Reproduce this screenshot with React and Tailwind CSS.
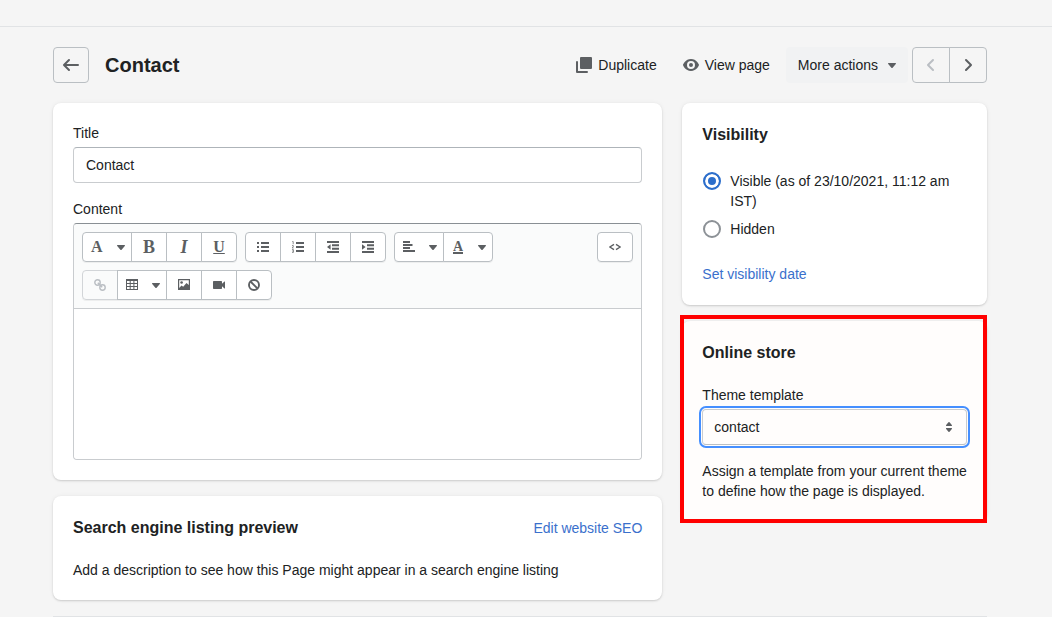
import { useState } from 'react';
import clsx from 'clsx';

const CARD = 'rounded-lg p-5 shadow-[0_0_5px_rgba(23,24,24,0.05),0_1px_2px_rgba(0,0,0,0.15)]';

function Icon({ size = 20, children, className }) {
    return (
        <svg width={size} height={size} viewBox={`0 0 ${size} ${size}`} fill="currentColor" className={clsx('shrink-0', className)} aria-hidden="true">
            {children}
        </svg>
    );
}

const Caret = () => (
    <svg width="8" height="8" viewBox="0 0 8 8" fill="currentColor" className="shrink-0" aria-hidden="true">
        <path d="M.6 2h6.8c.6 0 .8.600.4 1L4.600 6.700a.8.8 0 0 1-1.200 0L.2 3C-.2 2.600 0 2 .6 2z" />
    </svg>
);

function ToolGroup({ children }) {
    return <div className="flex rounded shadow-[0_1px_0_rgba(0,0,0,0.05)]">{children}</div>;
}

function ToolButton({ label, menu, disabled, children }) {
    return (
        <button
            type="button"
            aria-label={label}
            disabled={disabled}
            className={clsx(
                'flex h-[30px] items-center border -ml-px first:ml-0 first:rounded-l last:rounded-r',
                menu ? 'w-[50px] justify-between pl-2 pr-1.5' : 'w-9 justify-center',
                disabled ? 'border-[#d2d5d8] bg-[#fafbfb] text-[#babec3]' : 'relative border-[#babfc3] bg-white text-[#5c5f62]'
            )}
        >
            {children}
            {menu && <Caret />}
        </button>
    );
}

function Toolbar() {
    return (
        <div className="flex items-start justify-between rounded-t bg-[#fafbfb] border-b border-[#c9cccf] p-2">
            <div className="flex flex-wrap gap-2 max-w-[420px]">
                <ToolGroup>
                    <ToolButton label="Formatting" menu><span className="font-['Liberation_Serif',serif] text-base leading-5 font-bold">A</span></ToolButton>
                    <ToolButton label="Bold"><span className="font-['Liberation_Serif',serif] text-lg leading-5 font-bold">B</span></ToolButton>
                    <ToolButton label="Italic"><span className="font-['Liberation_Serif',serif] text-lg leading-5 font-bold italic">I</span></ToolButton>
                    <ToolButton label="Underline"><span className="font-['Liberation_Serif',serif] text-base leading-5 font-bold underline underline-offset-1">U</span></ToolButton>
                </ToolGroup>
                <ToolGroup>
                    <ToolButton label="Bulleted list">
                        <Icon size={12}>
                            <path d="M0 1h2v2H0zM0 5h2v2H0zM0 9h2v2H0zM4 1h8v2H4zM4 5h8v2H4zM4 9h8v2H4z" />
                        </Icon>
                    </ToolButton>
                    <ToolButton label="Numbered list">
                        <Icon size={12}>
                            <path d="M4 1h8v2H4zM4 5h8v2H4zM4 9h8v2H4z" />
                            <path d="M.3.5h.9v2.7M0 4.6h1.3v1.2L.2 7h1.4M0 8.6h1.4v2.8H0M.4 10h1" fill="none" stroke="currentColor" strokeWidth=".7" />
                        </Icon>
                    </ToolButton>
                    <ToolButton label="Outdent">
                        <Icon size={12}>
                            <path d="M0 0h12v2H0zM5 3.3h7v2H5zM5 6.7h7v2H5zM0 10h12v2H0zM0 6l3.6-2.8v5.6z" />
                        </Icon>
                    </ToolButton>
                    <ToolButton label="Indent">
                        <Icon size={12}>
                            <path d="M0 0h12v2H0zM5 3.3h7v2H5zM5 6.7h7v2H5zM0 10h12v2H0zM3.6 6L0 3.2v5.6z" />
                        </Icon>
                    </ToolButton>
                </ToolGroup>
                <ToolGroup>
                    <ToolButton label="Alignment" menu>
                        <Icon size={12}>
                            <path d="M0 0h7v2H0zM0 3h9.500v2H0zM0 6h7v2H0zM0 9h12v2H0z" />
                        </Icon>
                    </ToolButton>
                    <ToolButton label="Color" menu>
                        <span className="ml-px w-[10px] border-b-2 border-current text-center font-['Liberation_Serif',serif] text-sm leading-[11px] font-bold">A</span>
                    </ToolButton>
                </ToolGroup>
                <ToolGroup>
                    <ToolButton label="Insert link" disabled>
                        <Icon size={12}>
                            <g fill="none" stroke="currentColor" strokeWidth="1.400">
                                <circle cx="3.500" cy="3.500" r="2.700" />
                                <circle cx="8.500" cy="8.500" r="2.700" />
                                <path d="M3.800 3.800l4.400 4.400" />
                            </g>
                        </Icon>
                    </ToolButton>
                    <ToolButton label="Insert table" menu>
                        <Icon size={12}>
                            <path fillRule="evenodd" d="M0 0h12v11H0zM1 2v2h2.700V2zM4.700 2v2h2.700V2zM8.400 2v2H11V2zM1 5v2h2.700V5zM4.700 5v2h2.700V5zM8.400 5v2H11V5zM1 8v2h2.700V8zM4.700 8v2h2.700V8zM8.400 8v2H11V8z" />
                        </Icon>
                    </ToolButton>
                    <ToolButton label="Insert image">
                        <Icon size={12}>
                            <path fillRule="evenodd" d="M0 0h12v11H0zM1.200 1.200v7.800l2.300-2.500 1.700 1.300L8.500 4l2.300 2V1.200z" />
                            <circle cx="3.600" cy="3.500" r="1.300" />
                        </Icon>
                    </ToolButton>
                    <ToolButton label="Insert video">
                        <Icon size={12}>
                            <path d="M.7 2h7.600c.4 0 .7.300.7.700v2L11.500 2.500h.5v7h-.5L9 7.300v2c0 .4-.3.700-.7.700H.7A.7.7 0 0 1 0 9.300V2.700C0 2.300.3 2 .7 2z" />
                        </Icon>
                    </ToolButton>
                    <ToolButton label="Clear formatting">
                        <Icon size={12}>
                            <g fill="none" stroke="currentColor" strokeWidth="1.900">
                                <circle cx="6" cy="6" r="5" />
                                <path d="M2.500 2.500l7 7" />
                            </g>
                        </Icon>
                    </ToolButton>
                </ToolGroup>
            </div>
            <ToolGroup>
                <ToolButton label="Show HTML">
                    <Icon size={12}>
                        <path d="M5 3.400L.8 6 5 8.600M7 3.400L11.200 6 7 8.600" fill="none" stroke="currentColor" strokeWidth="1.400" />
                    </Icon>
                </ToolButton>
            </ToolGroup>
        </div>
    );
}

function PageHeader() {
    return (
        <header className="flex items-center">
            <button type="button" aria-label="Pages" className="flex size-9 items-center justify-center rounded border border-[#babfc3] text-[#5c5f62]">
                <Icon>
                    <path d="M17 9H5.414l3.293-3.293a.999.999 0 1 0-1.414-1.414l-5 5a.999.999 0 0 0 0 1.414l5 5a.997.997 0 0 0 1.414 0 .999.999 0 0 0 0-1.414L5.414 11H17a1 1 0 1 0 0-2z" />
                </Icon>
            </button>
            <h1 className="ml-4 text-xl leading-7 font-bold">Contact</h1>

            <div className="ml-auto flex items-center">
                <button type="button" className="flex h-9 items-center gap-1 px-3">
                    <Icon className="text-[#5c5f62]">
                        <path d="M7 2h10a1 1 0 0 1 1 1v10a1 1 0 0 1-1 1H7a1 1 0 0 1-1-1V3a1 1 0 0 1 1-1zM2 7a1 1 0 0 1 2 0v9h9a1 1 0 1 1 0 2H3a1 1 0 0 1-1-1z" />
                    </Icon>
                    Duplicate
                </button>
                <button type="button" className="flex h-9 items-center gap-1 px-3">
                    <Icon className="text-[#5c5f62]">
                        <path fillRule="evenodd" d="M17.928 9.628C17.836 9.399 15.611 4 9.999 4S2.162 9.399 2.070 9.628a1.017 1.017 0 0 0 0 .744C2.162 10.601 4.387 16 9.999 16s7.837-5.399 7.929-5.628a1.017 1.017 0 0 0 0-.744zM9.999 14a4 4 0 1 1 0-8 4 4 0 0 1 0 8zm0-6a2 2 0 1 0 0 4 2 2 0 0 0 0-4z" />
                    </Icon>
                    View page
                </button>
                <button type="button" className="ml-1 flex h-9 items-center gap-2.5 rounded bg-[#f1f2f3] px-3">
                    More actions
                    <span className="text-[#5c5f62]"><Caret /></span>
                </button>
                <nav aria-label="Pagination" className="ml-1 flex">
                    <button type="button" aria-label="Previous" disabled className="flex h-9 w-[38px] items-center justify-center rounded-l border border-[#babfc3] text-[#babec3]">
                        <Icon>
                            <path d="M12 16a.997.997 0 0 1-.707-.293l-5-5a.999.999 0 0 1 0-1.414l5-5a.999.999 0 1 1 1.414 1.414L8.414 10l4.293 4.293A.999.999 0 0 1 12 16z" />
                        </Icon>
                    </button>
                    <button type="button" aria-label="Next" className="-ml-px flex h-9 w-[38px] items-center justify-center rounded-r border border-[#babfc3] text-[#5c5f62]">
                        <Icon>
                            <path d="M8 16a.999.999 0 0 1-.707-1.707L11.586 10 7.293 5.707a.999.999 0 1 1 1.414-1.414l5 5a.999.999 0 0 1 0 1.414l-5 5A.997.997 0 0 1 8 16z" />
                        </Icon>
                    </button>
                </nav>
            </div>
        </header>
    );
}

function VisibilityOption({ value, current, onChange, children }) {
    return (
        <label className="flex items-start gap-2 py-1">
            <input
                type="radio"
                name="visibility"
                value={value}
                checked={current === value}
                onChange={() => onChange(value)}
                className="m-px size-[18px] shrink-0 appearance-none rounded-full border-2 border-[#8c9196] bg-white checked:border-[#2c6ecb] checked:bg-[#2c6ecb] checked:shadow-[inset_0_0_0_3px_white]"
            />
            <span>{children}</span>
        </label>
    );
}

export default function App() {
    const [title, setTitle] = useState('Contact');
    const [content, setContent] = useState('');
    const [visibility, setVisibility] = useState('visible');
    const [template, setTemplate] = useState('contact');

    return (
        <div className="min-h-screen bg-[#f5f5f5] font-['Liberation_Sans',Arial,sans-serif] text-sm leading-5 text-[#202223]">
            <div className="h-[27px] border-b border-[#e1e3e5]" />

            <main className="pl-[53px] pr-[65px] pt-5">
                <PageHeader />

                <div className="mt-5 grid grid-cols-[2fr_1fr] items-start gap-5">
                    <div className="flex min-w-0 flex-col gap-4">
                        <section className={clsx(CARD, 'flex flex-col gap-4 bg-white')}>
                            <div className="flex flex-col gap-1">
                                <label htmlFor="title">Title</label>
                                <input
                                    id="title"
                                    value={title}
                                    onChange={(e) => setTitle(e.target.value)}
                                    className="h-9 w-full rounded border border-[#c9cccf] border-t-[#aeb4b9] bg-white px-3"
                                />
                            </div>
                            <div className="flex flex-col gap-1">
                                <label htmlFor="content">Content</label>
                                <div className="rounded border border-[#c9cccf] border-t-[#898f94]">
                                    <Toolbar />
                                    <textarea
                                        id="content"
                                        value={content}
                                        onChange={(e) => setContent(e.target.value)}
                                        className="block h-[150px] w-full resize-none rounded-b bg-white p-3 outline-none"
                                    />
                                </div>
                            </div>
                        </section>

                        <section className={clsx(CARD, 'bg-white')}>
                            <div className="flex items-center justify-between">
                                <h2 className="text-base leading-6 font-bold">Search engine listing preview</h2>
                                <a href="#seo" className="text-[#3a70cc]">Edit website SEO</a>
                            </div>
                            <p className="mt-5">Add a description to see how this Page might appear in a search engine listing</p>
                        </section>
                    </div>

                    <aside className="flex min-w-0 flex-col gap-4">
                        <section className={clsx(CARD, 'bg-white')}>
                            <h2 className="text-base leading-6 font-bold">Visibility</h2>
                            <div className="mt-5">
                                <VisibilityOption value="visible" current={visibility} onChange={setVisibility}>
                                    Visible (as of 23/10/2021, 11:12 am IST)
                                </VisibilityOption>
                                <VisibilityOption value="hidden" current={visibility} onChange={setVisibility}>
                                    Hidden
                                </VisibilityOption>
                            </div>
                            <div className="pt-[21px] pb-px">
                                <a href="#date" className="block text-[#3a70cc]">Set visibility date</a>
                            </div>
                        </section>

                        <section className={clsx(CARD, 'relative bg-[#fffdfc]')}>
                            <h2 className="text-base leading-6 font-bold">Online store</h2>
                            <label htmlFor="template" className="mt-5 block">Theme template</label>
                            <div className="relative mt-1">
                                <select
                                    id="template"
                                    value={template}
                                    onChange={(e) => setTemplate(e.target.value)}
                                    className="h-9 w-full appearance-none rounded border border-[#c9cccf] border-b-[#babfc4] px-[11px] outline-2 outline-offset-1 outline-[#458fff]"
                                >
                                    <option value="contact">contact</option>
                                    <option value="page">Default page</option>
                                </select>
                                <Icon className="pointer-events-none absolute top-2 right-2 text-[#5c5f62]">
                                    <path d="M7.676 9h4.648c.563 0 .879-.603.53-1.014l-2.323-2.746a.708.708 0 0 0-1.062 0L7.146 7.986C6.798 8.397 7.113 9 7.676 9zm4.648 2H7.676c-.563 0-.878.603-.53 1.014l2.323 2.746c.27.32.792.32 1.062 0l2.323-2.746c.349-.411.033-1.014-.53-1.014z" />
                                </Icon>
                            </div>
                            <p className="mt-4">Assign a template from your current theme to define how the page is displayed.</p>
                            <div className="pointer-events-none absolute -top-1.5 right-0 -bottom-0.5 -left-0.5 border-4 border-[#ff0000]" />
                        </section>
                    </aside>
                </div>

                <div className="mt-4 border-t border-[#e1e3e5]" />
            </main>
        </div>
    );
}
